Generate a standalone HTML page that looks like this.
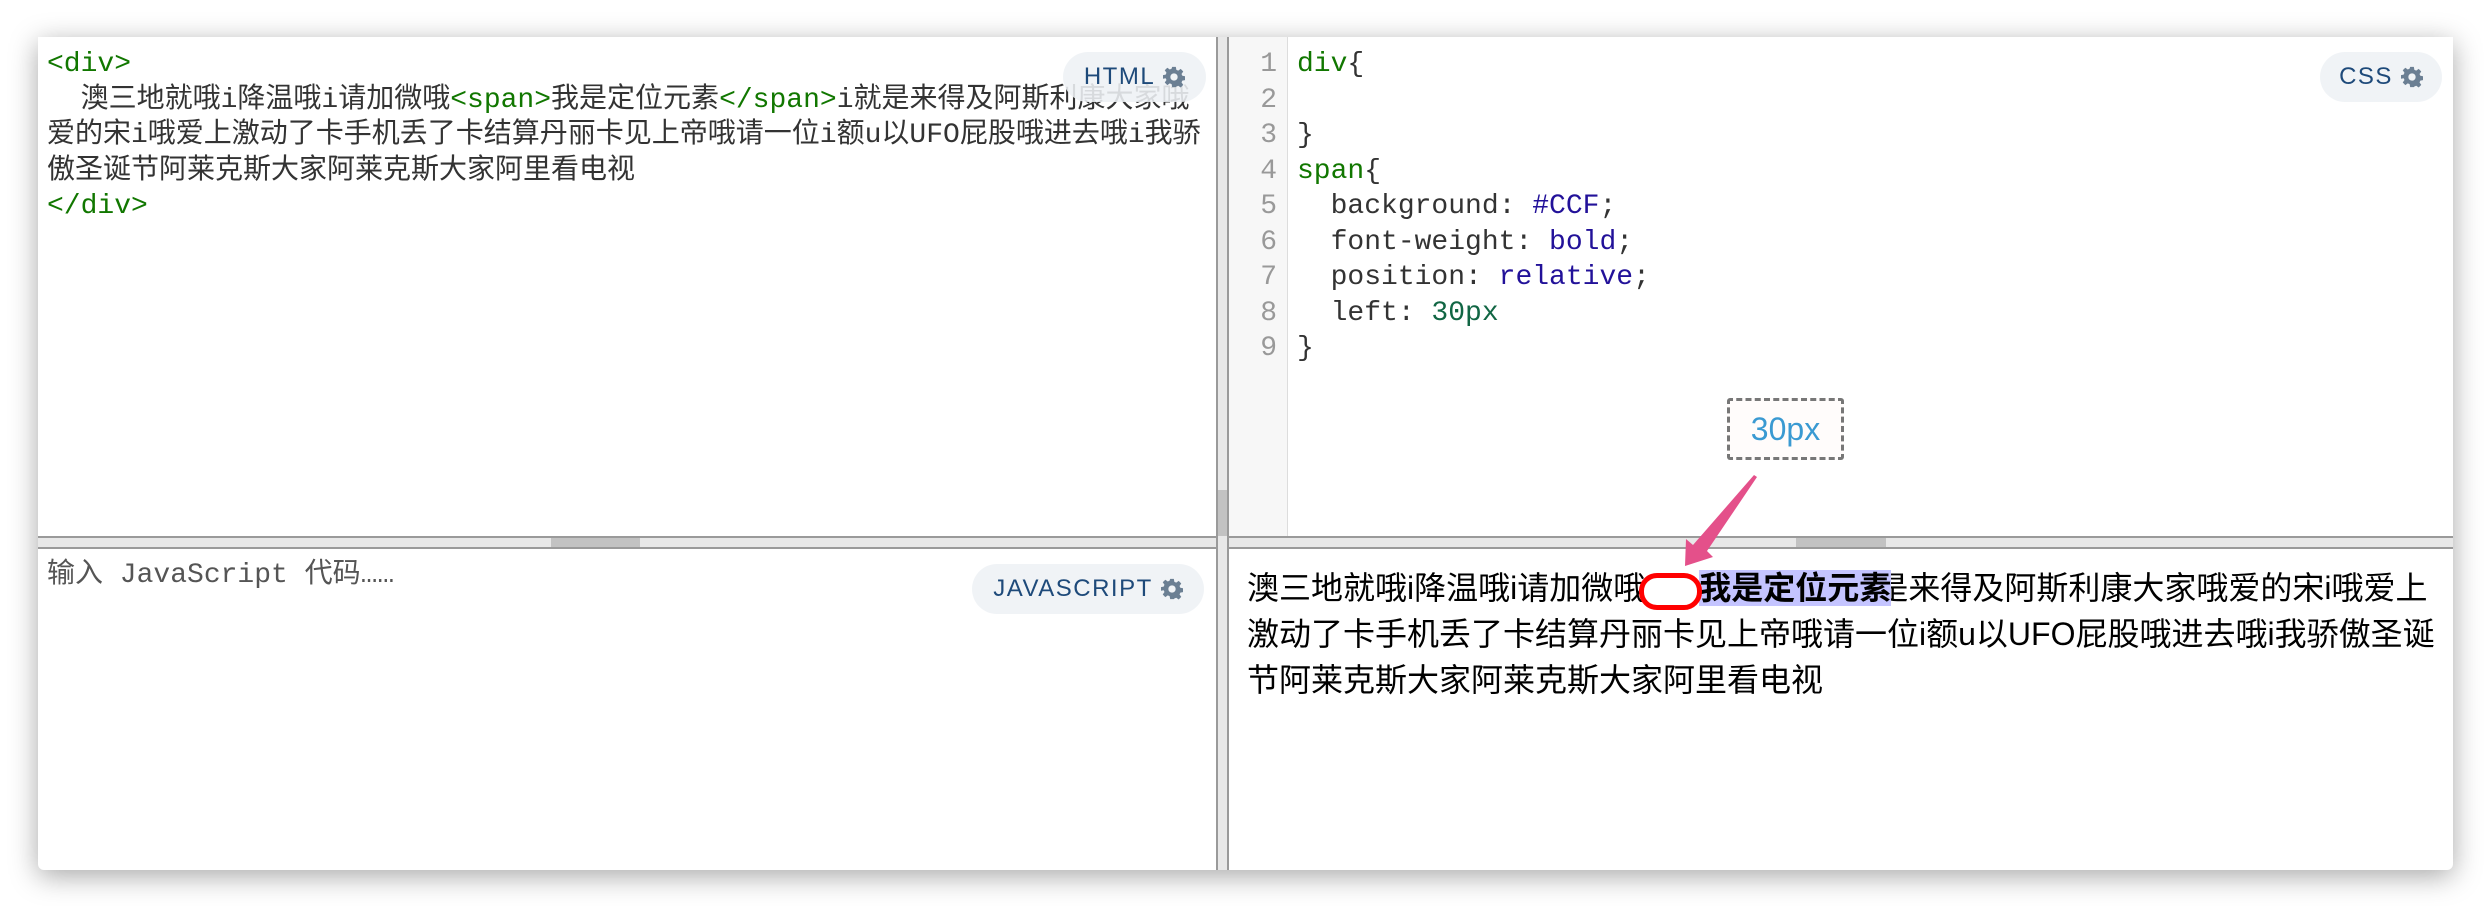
<!DOCTYPE html>
<html><head><meta charset="utf-8"><style>
*{margin:0;padding:0;box-sizing:border-box}
body{width:2490px;height:906px;background:#fff;position:relative;overflow:hidden}
.win{position:absolute;left:38px;top:37px;width:2415px;height:833px;background:#fff;box-shadow:0 6px 28px rgba(0,0,0,.35);border-radius:0 0 6px 6px;overflow:hidden}
.abs{position:absolute}
.code{font-family:"Liberation Mono","Noto Sans CJK SC",monospace;font-size:28px;line-height:35.5px;white-space:pre;color:#333}
.tag{color:#170}
.kw{color:#219}
.num{color:#164}
.badge{position:absolute;height:50px;border-radius:25px;background:rgba(238,241,245,.88);font-family:"Liberation Sans",sans-serif;font-size:24px;color:#1e4a7a;letter-spacing:1.5px;display:flex;align-items:center;justify-content:center;gap:8px}
.prev{font-family:"Liberation Sans","Noto Sans CJK SC",sans-serif;font-size:32px;line-height:46px;white-space:nowrap;color:#000}
.prev span{background:#C4C4FF;font-weight:bold;position:relative;left:54px}
</style></head><body>
<div class="win">
 <div class="abs code" style="left:9px;top:10px"><span class="tag">&lt;div&gt;</span>
  澳三地就哦i降温哦i请加微哦<span class="tag">&lt;span&gt;</span>我是定位元素<span class="tag">&lt;/span&gt;</span>i就是来得及阿斯利康大家哦
爱的宋i哦爱上激动了卡手机丢了卡结算丹丽卡见上帝哦请一位i额u以UFO屁股哦进去哦i我骄
傲圣诞节阿莱克斯大家阿莱克斯大家阿里看电视
<span class="tag">&lt;/div&gt;</span></div>
 <div class="badge" style="left:1025px;top:15px;width:143px">HTML <svg width="22" height="22" viewBox="0 0 24 24"><path fill="#6b7f93" d="M10 1h4l.6 3.2 2 .9 2.7-1.9 2.8 2.8-1.9 2.7.9 2 3.2.6v4l-3.2.6-.9 2 1.9 2.7-2.8 2.8-2.7-1.9-2 .9L14 23h-4l-.6-3.2-2-.9-2.7 1.9-2.8-2.8 1.9-2.7-.9-2L-.3 14v-4l3.2-.6.9-2L1.9 4.7l2.8-2.8 2.7 1.9 2-.9zM12 8a4 4 0 100 8 4 4 0 000-8z"/></svg></div>
 <div class="abs" style="left:1178px;top:0;width:13px;height:833px;background:#e8e8e8;border-left:2px solid #9a9a9a;border-right:2px solid #9a9a9a"></div>
 <div class="abs" style="left:1180px;top:453px;width:9px;height:46px;background:#c2c2c2"></div>
 <div class="abs" style="left:1191px;top:0;width:59px;height:499px;background:#f7f7f7;border-right:1px solid #ddd"></div>
 <div class="abs code" style="left:1191px;top:10px;width:48px;text-align:right;color:#999">1
2
3
4
5
6
7
8
9</div>
 <div class="abs code" style="left:1259px;top:10px"><span class="tag">div</span>{

}
<span class="tag">span</span>{
  background: <span class="kw">#CCF</span>;
  font-weight: <span class="kw">bold</span>;
  position: <span class="kw">relative</span>;
  left: <span class="num">30px</span>
}</div>
 <div class="badge" style="left:2282px;top:15px;width:122px">CSS <svg width="22" height="22" viewBox="0 0 24 24"><path fill="#6b7f93" d="M10 1h4l.6 3.2 2 .9 2.7-1.9 2.8 2.8-1.9 2.7.9 2 3.2.6v4l-3.2.6-.9 2 1.9 2.7-2.8 2.8-2.7-1.9-2 .9L14 23h-4l-.6-3.2-2-.9-2.7 1.9-2.8-2.8 1.9-2.7-.9-2L-.3 14v-4l3.2-.6.9-2L1.9 4.7l2.8-2.8 2.7 1.9 2-.9zM12 8a4 4 0 100 8 4 4 0 000-8z"/></svg></div>
 <div class="abs" style="left:0;top:499px;width:1178px;height:13px;background:#e8e8e8;border-top:2px solid #9a9a9a;border-bottom:2px solid #9a9a9a"></div>
 <div class="abs" style="left:513px;top:501px;width:89px;height:9px;background:#c2c2c2"></div>
 <div class="abs" style="left:1191px;top:499px;width:1224px;height:13px;background:#e8e8e8;border-top:2px solid #9a9a9a;border-bottom:2px solid #9a9a9a"></div>
 <div class="abs" style="left:1758px;top:501px;width:90px;height:9px;background:#c2c2c2"></div>
 <div class="abs code" style="left:9px;top:521px;color:#555">输入 JavaScript 代码……</div>
 <div class="badge" style="left:934px;top:527px;width:232px">JAVASCRIPT <svg width="22" height="22" viewBox="0 0 24 24"><path fill="#6b7f93" d="M10 1h4l.6 3.2 2 .9 2.7-1.9 2.8 2.8-1.9 2.7.9 2 3.2.6v4l-3.2.6-.9 2 1.9 2.7-2.8 2.8-2.7-1.9-2 .9L14 23h-4l-.6-3.2-2-.9-2.7 1.9-2.8-2.8 1.9-2.7-.9-2L-.3 14v-4l3.2-.6.9-2L1.9 4.7l2.8-2.8 2.7 1.9 2-.9zM12 8a4 4 0 100 8 4 4 0 000-8z"/></svg></div>
 <div class="abs prev" style="left:1209px;top:528px">澳三地就哦i降温哦i请加微哦<span>我是定位元素</span>i就是来得及阿斯利康大家哦爱的宋i哦爱上<br>激动了卡手机丢了卡结算丹丽卡见上帝哦请一位i额u以UFO屁股哦进去哦i我骄傲圣诞<br>节阿莱克斯大家阿莱克斯大家阿里看电视</div>
</div>
<div class="abs" style="left:1639px;top:573px;width:63px;height:37px;border:5px solid #f00;border-radius:18px;background:#fff"></div>
<div class="abs" style="left:1727px;top:398px;width:117px;height:62px;border:3px dashed #777;border-radius:3px;background:#fffcfb;font-family:'Liberation Sans',sans-serif;font-size:32px;color:#3a9ad2;display:flex;align-items:center;justify-content:center">30px</div>
<svg class="abs" style="left:0;top:0" width="2490" height="906"><polygon fill="#e4508a" points="1757,477 1707,551 1713,557 1685,566 1686,539 1693,545 1754,475"/></svg>
</body></html>
